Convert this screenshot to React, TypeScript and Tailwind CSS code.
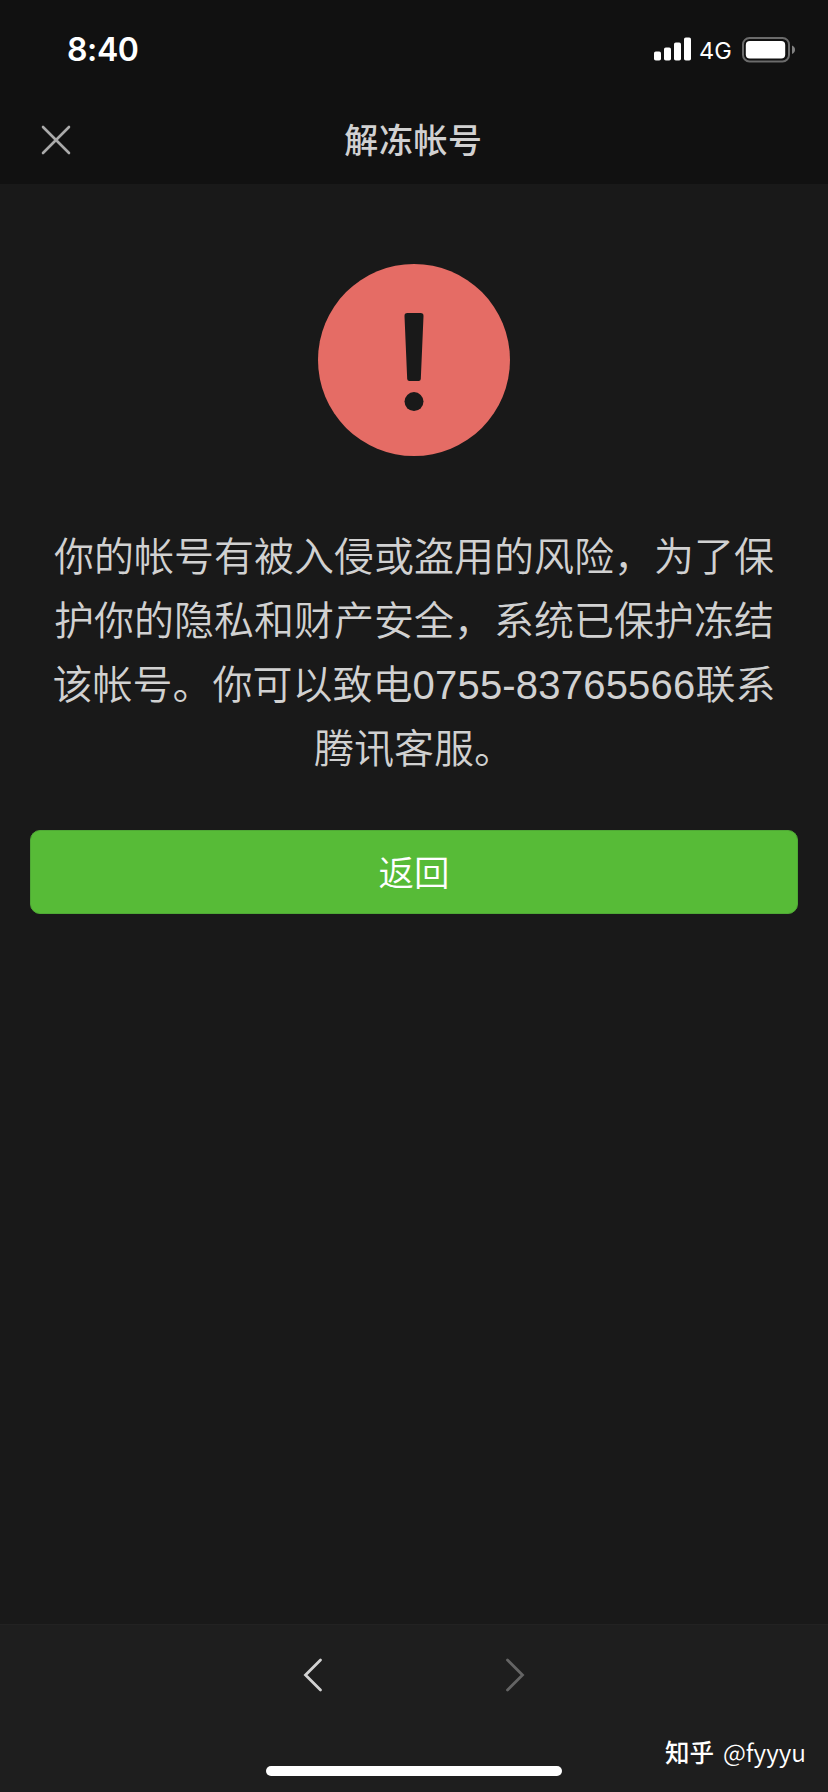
const cjk = "font-['Liberation_Sans','Noto_Sans_CJK_SC',sans-serif]";

const messageLines = [
  "你的帐号有被入侵或盗用的风险，为了保",
  "护你的隐私和财产安全，系统已保护冻结",
];

function SignalIcon() {
  return (
    <svg width="38" height="24" viewBox="0 0 38 24" fill="#fff">
      <rect x="0" y="14.5" width="7" height="9" rx="1.8" />
      <rect x="10" y="10.5" width="7" height="13" rx="1.8" />
      <rect x="20" y="5.5" width="7" height="18" rx="1.8" />
      <rect x="30" y="0.5" width="7" height="23" rx="1.8" />
    </svg>
  );
}

function BatteryIcon() {
  return (
    <svg width="54" height="26" viewBox="0 0 54 26">
      <rect
        x="1"
        y="1"
        width="46"
        height="23.4"
        rx="6.5"
        fill="none"
        stroke="#6b6b6b"
        strokeWidth="2"
      />
      <rect x="3.8" y="3.9" width="39.4" height="17.6" rx="4" fill="#fff" />
      <path d="M50 8.5c2 .8 3 2.2 3 4.2s-1 3.4-3 4.2z" fill="#808080" />
    </svg>
  );
}

function StatusBar() {
  return (
    <div className="flex h-[88px] items-start justify-between pr-8 pl-[67px] text-white">
      <span className="mt-[30px] font-['Inter',sans-serif] text-[32px] leading-10 font-semibold tracking-[-0.4px]">
        8:40
      </span>
      <div className="mt-[37px] flex items-start">
        <SignalIcon />
        <span className="ml-[7px] w-[43px] font-['Inter',sans-serif] text-[23.5px] leading-7">
          4G
        </span>
        <BatteryIcon />
      </div>
    </div>
  );
}

function NavBar() {
  return (
    <div className="grid h-24 grid-cols-[1fr_auto_1fr] items-start">
      <button aria-label="关闭" className="mt-[37px] ml-[41px] w-[30px]">
        <svg width="30" height="30" viewBox="0 0 30 30">
          <path
            d="M2 2l26 26M28 2L2 28"
            stroke="#aaa"
            strokeWidth="2.6"
            strokeLinecap="round"
          />
        </svg>
      </button>
      <h1 className={`${cjk} mt-[29px] -ml-px text-[34px] leading-[48px] font-medium tracking-[0.6px] text-[#d1d1d1]`}>
        解冻帐号
      </h1>
    </div>
  );
}

function WarnIcon() {
  return (
    <svg width="192" height="192" viewBox="0 0 192 192" className="mx-auto block">
      <circle cx="96" cy="96" r="96" fill="#e56c65" />
      <path
        d="M89.5 49h13a3 3 0 0 1 3 3.2l-2.7 62.8a2.2 2.2 0 0 1-2.2 2h-9.2a2.2 2.2 0 0 1-2.2-2L86.5 52.2a3 3 0 0 1 3-3.2z"
        fill="#191919"
      />
      <circle cx="96" cy="137.6" r="9.5" fill="#191919" />
    </svg>
  );
}

function App() {
  return (
    <div className="flex h-[1792px] w-[828px] flex-col overflow-hidden bg-[#191919]">
      <header className="h-[184px] bg-[#111]">
        <StatusBar />
        <NavBar />
      </header>

      <main className="flex-1 px-[30px] pt-20">
        <WarnIcon />
        <div className={`${cjk} mt-[69px] text-center text-[40px] leading-[64px] font-[350] whitespace-nowrap text-[#d1d1d1]`}>
          {messageLines.map((line) => (
            <p key={line}>{line}</p>
          ))}
          <p>
            该帐号。你可以致电
            <span className="tracking-[0.2px]">0755-83765566</span>
            联系
          </p>
          <p>腾讯客服。</p>
        </div>
        <button
          className={`${cjk} mt-[49px] flex h-[84px] w-full items-center justify-center rounded-[10px] border border-[#4fa935] bg-[#57bb37] pt-[5px] text-[35.5px] font-[350] text-white`}
        >
          返回
        </button>
      </main>

      <footer className="relative flex h-[168px] flex-col border-t border-[#222] bg-[#1e1e1e]">
        <div className="flex justify-center gap-[182px] pt-[33px]">
          <svg width="20" height="34" viewBox="0 0 20 34" fill="none">
            <path d="M17.5 2L2.5 17l15 15" stroke="#d2d2d2" strokeWidth="2.8" strokeLinecap="round" />
          </svg>
          <svg width="20" height="34" viewBox="0 0 20 34" fill="none">
            <path d="M2.5 2l15 15-15 15" stroke="#646464" strokeWidth="2.8" strokeLinecap="round" />
          </svg>
        </div>
        <div className="mx-auto mt-auto mb-4 h-2.5 w-[296px] rounded-full bg-white" />
        <div className="absolute right-[22px] bottom-[22px] flex gap-[9px] font-['Noto_Sans_CJK_SC',sans-serif] text-[24.5px] leading-9 text-white">
          <span className="font-medium">知乎</span>
          <span className="font-[350]">@fyyyu</span>
        </div>
      </footer>
    </div>
  );
}

export default App;
